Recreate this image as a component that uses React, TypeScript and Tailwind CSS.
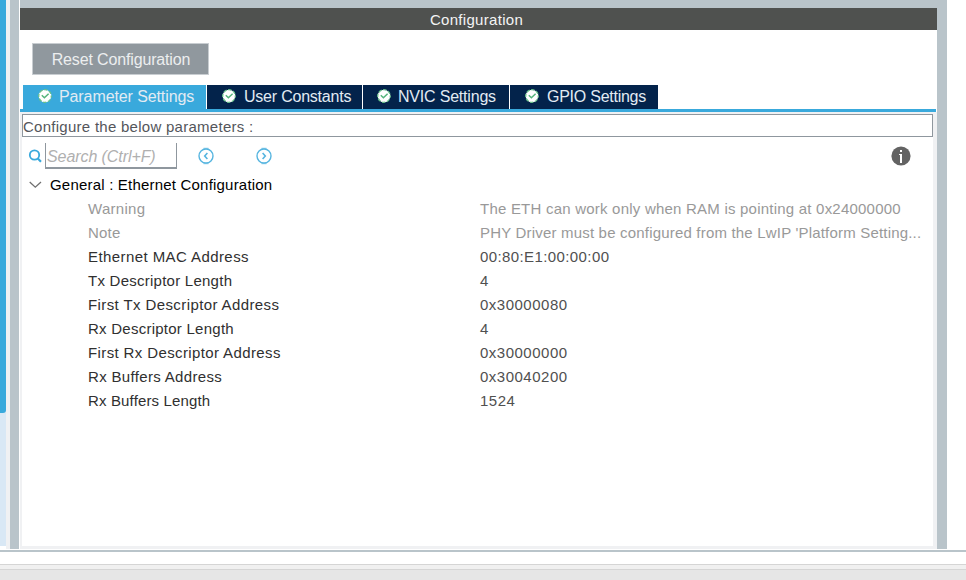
import React from "react";

type Row = { name: string; value: string; muted?: boolean; nameStyle: string; valueStyle: string };

const rows: Row[] = [
  { name: "Warning", value: "The ETH can work only when RAM is pointing at 0x24000000", muted: true, nameStyle: "tracking-[0.3px]", valueStyle: "tracking-[0.22px]" },
  { name: "Note", value: "PHY Driver must be configured from the LwIP 'Platform Setting...", muted: true, nameStyle: "tracking-[0.2px]", valueStyle: "tracking-[0.19px]" },
  { name: "Ethernet MAC Address", value: "00:80:E1:00:00:00", nameStyle: "tracking-[0.42px]", valueStyle: "tracking-[0.4px]" },
  { name: "Tx Descriptor Length", value: "4", nameStyle: "tracking-[0.25px]", valueStyle: "tracking-[0.5px]" },
  { name: "First Tx Descriptor Address", value: "0x30000080", nameStyle: "tracking-[0.4px]", valueStyle: "tracking-[0.5px]" },
  { name: "Rx Descriptor Length", value: "4", nameStyle: "tracking-[0.25px]", valueStyle: "tracking-[0.5px]" },
  { name: "First Rx Descriptor Address", value: "0x30000000", nameStyle: "tracking-[0.38px]", valueStyle: "tracking-[0.5px]" },
  { name: "Rx Buffers Address", value: "0x30040200", nameStyle: "tracking-[0.33px]", valueStyle: "tracking-[0.5px]" },
  { name: "Rx Buffers Length", value: "1524", nameStyle: "tracking-[0.15px]", valueStyle: "tracking-[0.5px]" },
];

const tabs = [
  { label: "Parameter Settings", style: "w-[183px] gap-[7px] pl-[15px] bg-[#39a9dc] tracking-[-0.1px]" },
  { label: "User Constants", style: "w-[155px] gap-[8px] pl-[15px] bg-[#03234b] tracking-[-0.22px]" },
  { label: "NVIC Settings", style: "w-[146px] gap-[7px] pl-[14px] bg-[#03234b] tracking-[-0.2px]" },
  { label: "GPIO Settings", style: "w-[148px] gap-[8px] pl-[15px] bg-[#03234b] tracking-[-0.25px]" },
];

function CheckIcon() {
  return (
    <svg width="14" height="14" viewBox="0 0 14 14" className="-mt-[2px] shrink-0">
      <circle cx="7" cy="7" r="6.3" fill="#fff" stroke="#68c08a" strokeWidth="1.3" strokeDasharray="3.3 1.65" strokeDashoffset="1.6" />
      <path d="M3.8 6.3 6.4 8.8l4.2-4" fill="none" stroke="#55b57c" strokeWidth="1.5" />
    </svg>
  );
}

function StepIcon({ path }: { path: string }) {
  return (
    <svg width="18" height="18" viewBox="0 0 18 18" fill="none" stroke="#56b5e0" className="shrink-0">
      <circle cx="9" cy="9" r="7" strokeWidth="1.4" />
      <path d="M6.5 1.3h5M6.5 16.7h5" strokeWidth="0.8" />
      <path d={path} strokeWidth="1.6" />
    </svg>
  );
}

export default function App() {
  return (
    <div className="flex h-[580px] w-[966px] flex-col overflow-hidden bg-white font-['Liberation_Sans',Arial,sans-serif] text-[15px] whitespace-nowrap">
      <div className="flex h-[549px]">
        <div className="h-[546px] w-[6px] bg-[#d9e8f5]">
          <div className="h-[413px] rounded-br-[3px] bg-[#39a9dc]" />
        </div>
        <div className="w-[4px] bg-[#f0f1f3]" />
        <div className="mr-px w-[9px] bg-[#b9c4ca]" />
        <div className="flex w-[917px] flex-col">
          <div className="h-[8px] bg-[#b9c4ca]" />
          <div className="flex h-[22px] items-center justify-center bg-[#4f514f] pt-[2px] pr-[4px] tracking-[0.3px] text-[#f4f4f4]">
            Configuration
          </div>
          <div className="h-[55px] pt-[13px] pl-[12px]">
            <button className="flex h-[32px] w-[177px] items-center justify-center border border-[#c8cdd1] bg-[#90989e] pt-[2px] pl-px text-base tracking-[-0.15px] text-[#eceeef]">
              Reset Configuration
            </button>
          </div>
          <div className="flex h-[24px] gap-px pl-[3px]">
            {tabs.map((t) => (
              <div key={t.label} className={"flex items-center text-base text-[#e2ebf3] " + t.style}>
                <CheckIcon />
                {t.label}
              </div>
            ))}
          </div>
          <div className="mr-px h-[3px] bg-[#39a9dc]" />
          <div className="flex h-[437px] flex-col bg-[#f0f1f3] pt-[2px] pr-[4px] pb-[3px] pl-[2px]">
            <div className="flex h-[23px] shrink-0 items-center border border-[#8f979e] bg-white pt-[4px] tracking-[0.27px] text-[#54565b]">
              Configure the below parameters :
            </div>
            <div className="flex-1 bg-white">
              <div className="flex h-[36px] items-start pt-[6px] pl-[6px]">
                <svg width="15" height="15" viewBox="0 0 15 15" fill="none" stroke="#39a9dc" className="mt-[6px] shrink-0">
                  <circle cx="6.5" cy="6" r="4.7" strokeWidth="1.8" />
                  <path d="m9.8 9.5 3.2 3.2" strokeWidth="2.2" />
                </svg>
                <div className="ml-[2px] flex h-[26px] w-[132px] items-center border-x border-b-2 border-[#8f979e] pt-[3px] pl-px text-base tracking-[-0.08px] text-[#b0b0b0] italic">
                  Search (Ctrl+F)
                </div>
                <div className="mt-[4px] ml-[20px] flex gap-[40px]">
                  <StepIcon path="m10.4 6-2.7 3 2.7 3" />
                  <StepIcon path="m7.6 6 2.7 3-2.7 3" />
                </div>
                <svg width="20" height="20" viewBox="0 0 20 20" className="mt-[3px] ml-[618px] shrink-0">
                  <circle cx="10" cy="10" r="9.6" fill="#636363" />
                  <path d="M9 4h2v2H9zM8 8h3v9H9V9H8z" fill="#fff" />
                </svg>
              </div>
              <div className="flex h-[24px] items-center pl-[7px] tracking-[0.2px] text-black">
                <svg width="13" height="8" viewBox="0 0 13 8" fill="none" stroke="#707070" strokeWidth="1.3" className="mr-[8px] shrink-0">
                  <path d="m.7 1 5.6 5.2L12 1" />
                </svg>
                General : Ethernet Configuration
              </div>
              {rows.map((r) => (
                <div key={r.name} className={"flex h-[24px] items-center pl-[66px] " + (r.muted ? "text-[#999]" : "text-[#505050]")}>
                  <div className={"w-[392px] shrink-0 " + r.nameStyle + (r.muted ? "" : " text-[#303030]")}>{r.name}</div>
                  <div className={r.valueStyle}>{r.value}</div>
                </div>
              ))}
            </div>
          </div>
        </div>
        <div className="w-[10px] bg-[#b9c4ca]" />
      </div>
      <div className="mt-px h-[2px] bg-[#b9c4ca]" />
      <div className="mt-[12px] h-[6px] border-y border-[#d5d5d5] bg-[#f0f0f0]" />
      <div className="flex-1 bg-[#e6e6e6]" />
    </div>
  );
}
